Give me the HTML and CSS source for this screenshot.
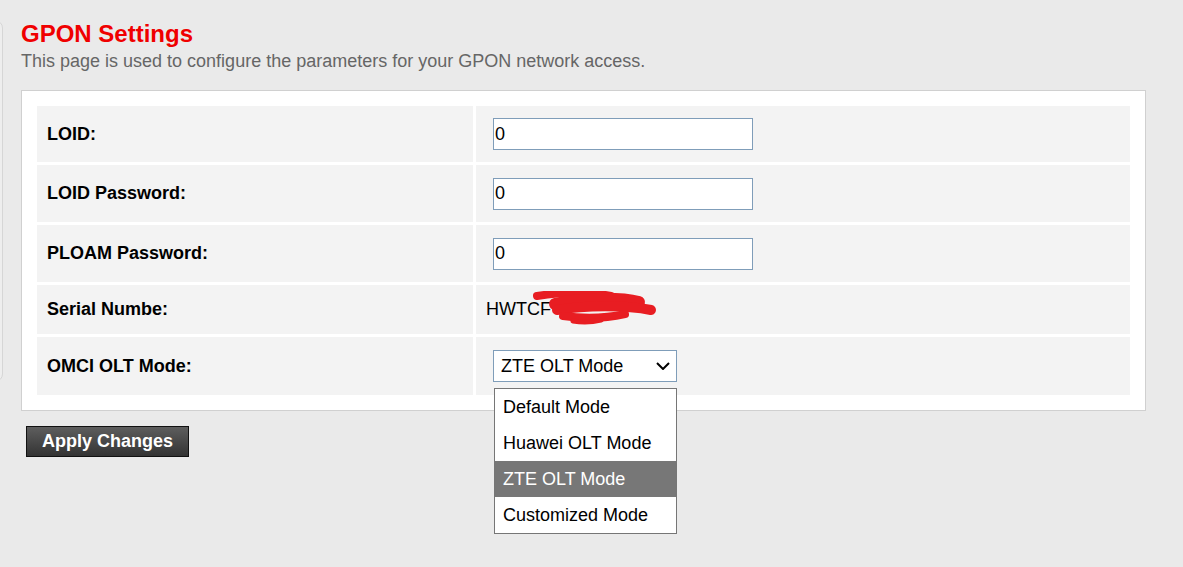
FILE: index.html
```html
<!DOCTYPE html>
<html lang="en">
<head>
    <meta charset="UTF-8">
    <meta name="viewport" content="width=device-width, initial-scale=1.0">
    <title>GPON Settings</title>
    <link rel="stylesheet" href="styles.css">
</head>
<body>
    <div class="sidebar"></div>

    <div class="page">
        <h1 class="page-title">GPON Settings</h1>
        <p class="page-desc">This page is used to configure the parameters for your GPON network access.</p>

        <form class="settings-box" onsubmit="return false">
            <table class="settings-table">
                <tr class="row-field">
                    <td class="label">LOID:</td>
                    <td class="value"><input type="text" class="field" value="0"></td>
                </tr>
                <tr class="row-field row-tall">
                    <td class="label">LOID Password:</td>
                    <td class="value"><input type="text" class="field" value="0"></td>
                </tr>
                <tr class="row-field row-tall">
                    <td class="label">PLOAM Password:</td>
                    <td class="value"><input type="text" class="field" value="0"></td>
                </tr>
                <tr class="row-text">
                    <td class="label">Serial Numbe:</td>
                    <td class="value">
                        <span class="serial">HWTCF
                            <!-- hand-drawn red marker over the rest of the serial -->
                            <svg class="redact" width="125" height="36" viewBox="0 0 125 36">
                                <g fill="none" stroke="#e81d22" stroke-linecap="round" stroke-linejoin="round">
                                    <path d="M4 5 C30 1 58 1 78 5" stroke-width="8"/>
                                    <path d="M22 13 C44 7 86 6 106 11" stroke-width="12"/>
                                    <path d="M24 19 C52 14 94 14 118 19" stroke-width="10"/>
                                    <path d="M30 25 C52 28 74 27 92 23" stroke-width="8"/>
                                    <path d="M40 30 C52 32 60 31 68 29" stroke-width="5"/>
                                </g>
                            </svg>
                        </span>
                    </td>
                </tr>
                <tr class="row-select">
                    <td class="label">OMCI OLT Mode:</td>
                    <td class="value">
                        <div class="select-wrap">
                            <select class="mode-select">
                                <option>Default Mode</option>
                                <option>Huawei OLT Mode</option>
                                <option selected>ZTE OLT Mode</option>
                                <option>Customized Mode</option>
                            </select>
                            <svg class="chevron" width="14" height="8" viewBox="0 0 14 8">
                                <path d="M1 1 L7 7 L13 1" fill="none" stroke="#000" stroke-width="2"/>
                            </svg>
                            <ul class="select-menu">
                                <li>Default Mode</li>
                                <li>Huawei OLT Mode</li>
                                <li class="active">ZTE OLT Mode</li>
                                <li>Customized Mode</li>
                            </ul>
                        </div>
                    </td>
                </tr>
            </table>
        </form>

        <button class="apply-btn">Apply Changes</button>
    </div>
</body>
</html>
```

FILE: styles.css
```css
html {
    height: 100%;
}

body {
    margin: 0;
    padding: 0;
    min-height: 100%;
    background-color: #eaeaea;
    font-family: "Liberation Sans", Arial, sans-serif;
    display: flex;
    align-items: flex-start;
}

.sidebar {
    flex: 0 0 auto;
    width: 200px;
    height: 362px;
    margin-top: 20px;
    margin-left: -197px;
    box-sizing: border-box;
    border: 1px solid #d6d6d6;
    border-radius: 8px;
    background-color: #eeeeee;
}

.page {
    flex: 1;
    padding: 20px 0 0 18px;
}

.page-title {
    margin: 0;
    font-size: 24px;
    line-height: 28px;
    font-weight: bold;
    color: #f00000;
}

.page-desc {
    margin: 3px 0 0;
    font-size: 18px;
    line-height: 21px;
    color: #666;
}

.settings-box {
    width: 1125px;
    box-sizing: border-box;
    margin: 18px 0 0;
    padding: 12px;
    background-color: #fff;
    border: 1px solid #d0d0d0;
}

.settings-table {
    width: 100%;
    border-collapse: separate;
    border-spacing: 3px;
}

.settings-table td {
    background-color: #f3f3f3;
    padding: 0 10px;
    font-size: 18px;
    color: #000;
    vertical-align: middle;
}

.settings-table .label {
    width: 416px;
    font-weight: bold;
}

.row-field { height: 56px; }
.row-tall { height: 57px; }
.row-text { height: 49px; }
.row-select { height: 58px; }

.field {
    width: 260px;
    height: 32px;
    margin: 0 0 0 7px;
    box-sizing: border-box;
    padding: 0 1px;
    border: 1px solid #7f9db9;
    font-family: inherit;
    font-size: 18px;
    color: #000;
    vertical-align: middle;
}

.serial {
    position: relative;
    display: inline-block;
    line-height: 20px;
}

.redact {
    position: absolute;
    left: 47px;
    top: -8px;
}

.select-wrap {
    position: relative;
    display: inline-block;
    margin-left: 7px;
    vertical-align: middle;
}

.mode-select {
    -webkit-appearance: none;
    appearance: none;
    display: block;
    width: 184px;
    height: 32px;
    margin: 0;
    padding: 0 0 0 7px;
    border: 1px solid #7f9db9;
    border-radius: 0;
    background-color: #fff;
    font-family: inherit;
    font-size: 18px;
    color: #000;
}

.chevron {
    position: absolute;
    right: 7px;
    top: 12px;
    pointer-events: none;
}

.select-menu {
    position: absolute;
    top: 38px;
    left: 1px;
    width: 183px;
    box-sizing: border-box;
    margin: 0;
    padding: 0;
    list-style: none;
    background-color: #fff;
    border: 1px solid #767676;
    z-index: 2;
}

.select-menu li {
    height: 36px;
    line-height: 36px;
    padding-left: 8px;
    font-size: 18px;
    font-weight: normal;
    color: #000;
    white-space: nowrap;
}

.select-menu li.active {
    background-color: #777;
    color: #fff;
}

.apply-btn {
    display: block;
    width: 163px;
    height: 31px;
    margin: 15px 0 0 5px;
    padding: 0;
    border: 1px solid #111;
    background: linear-gradient(#5e5e5e, #333);
    color: #fff;
    font-family: inherit;
    font-size: 18px;
    font-weight: bold;
    cursor: pointer;
}
```
